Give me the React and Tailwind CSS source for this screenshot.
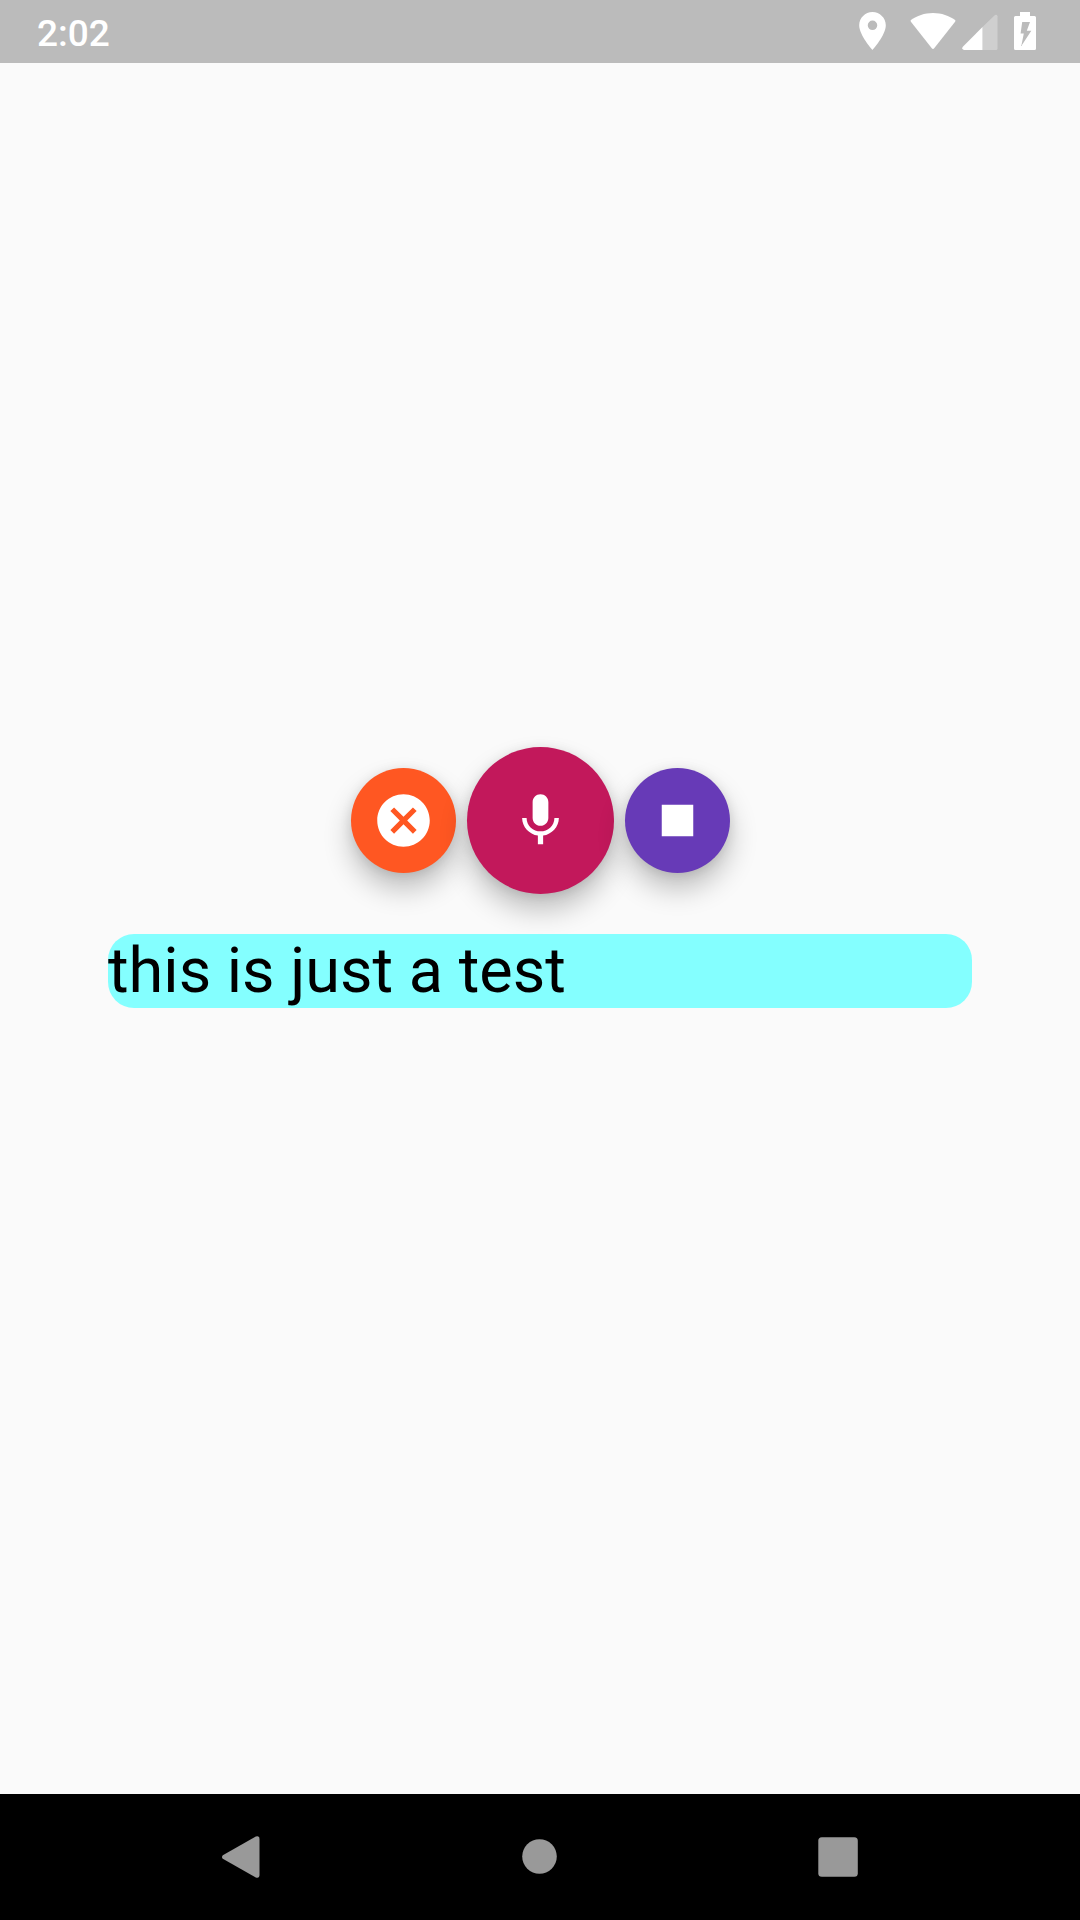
import React from "react";

function LocationIcon() {
  return (
    <svg viewBox="5 2 14 20" className="h-[38px] w-[27px]" fill="currentColor" aria-hidden="true">
      <path d="M12 2C8.13 2 5 5.13 5 9c0 5.25 7 13 7 13s7-7.75 7-13c0-3.87-3.13-7-7-7zm0 9.5a2.5 2.5 0 0 1 0-5 2.5 2.5 0 0 1 0 5z" />
    </svg>
  );
}

function WifiIcon() {
  return (
    <svg viewBox="0 0 46 38" className="h-[38px] w-[46px]" fill="currentColor" aria-hidden="true">
      <path d="M23 1C14.5 1 6.8 3.8.9 8.1Q.2 8.7.9 9.7L21.8 36.2Q23 37.6 24.2 36.2L45.1 9.7Q45.8 8.7 45.1 8.1C39.2 3.8 31.500 1 23 1z" />
    </svg>
  );
}

function SignalIcon() {
  return (
    <svg viewBox="0 0 36 36" className="h-9 w-9" fill="currentColor" aria-hidden="true">
      <path d="M20.500 13V36H34Q35.500 36 35.500 34.500V2.200Q35 .200 33 1z" opacity="0.3" />
      <path d="M20.500 13V36H2Q-.500 35.500.600 33z" />
    </svg>
  );
}

function BatteryIcon() {
  return (
    <svg viewBox="0 0 22 38" className="h-[38px] w-[22px]" fill="currentColor" aria-hidden="true">
      <path
        fillRule="evenodd"
        d="M6 0H16V4H20.500Q22 4 22 5.500V36.500Q22 38 20.500 38H1.500Q0 38 0 36.500V5.500Q0 4 1.500 4H6zM8.200 10L6.600 21.500H9.800L7.300 34L17.300 18.800H12.800L16 10z"
      />
    </svg>
  );
}

function StatusBar() {
  return (
    <header className="flex h-[63px] items-center justify-between bg-[#bbbbbb] pl-[37px] pr-11 text-white">
      <time className="pt-1 text-[37px] font-medium leading-[44px]">2:02</time>
      <div className="flex items-end pb-0.5">
        <LocationIcon />
        <div className="ml-6 flex items-end">
          <WifiIcon />
          <div className="ml-1.5 flex items-end gap-4">
            <SignalIcon />
            <BatteryIcon />
          </div>
        </div>
      </div>
    </header>
  );
}

function RoundButton({ label, className, path }) {
  return (
    <button
      type="button"
      aria-label={label}
      className={
        "flex shrink-0 items-center justify-center rounded-full text-white shadow-[0_16px_28px_rgba(0,0,0,0.24),0_2px_12px_rgba(0,0,0,0.10)] " +
        className
      }
    >
      <svg viewBox="0 0 24 24" className="size-[63px]" fill="currentColor" aria-hidden="true">
        <path d={path} />
      </svg>
    </button>
  );
}

const CANCEL =
  "M12 2C6.470 2 2 6.470 2 12s4.470 10 10 10 10-4.470 10-10S17.530 2 12 2zm5 13.590L15.590 17 12 13.410 8.410 17 7 15.590 10.590 12 7 8.410 8.410 7 12 10.590 15.590 7 17 8.410 13.410 12 17 15.590z";
const MIC =
  "M12 14c1.660 0 2.990-1.340 2.990-3L15 5c0-1.660-1.340-3-3-3S9 3.340 9 5v6c0 1.660 1.340 3 3 3zm5.300-3c0 3-2.540 5.100-5.300 5.100S6.700 14 6.700 11H5c0 3.410 2.720 6.230 6 6.720V21h2v-3.280c3.280-.480 6-3.300 6-6.720h-1.700z";
const STOP = "M6 6h12v12H6z";

function NavButton({ label, children }) {
  return (
    <button type="button" aria-label={label} className="flex items-center justify-center">
      <svg viewBox="0 0 42 42" className="size-[42px]" fill="currentColor" aria-hidden="true">
        {children}
      </svg>
    </button>
  );
}

export default function App() {
  return (
    <div className="flex min-h-screen flex-col bg-[#fafafa] font-[Roboto,sans-serif] text-black">
      <StatusBar />
      <main className="flex flex-1 flex-col items-center justify-center pb-[102px]">
        <div className="flex items-center gap-[11px]">
          <RoundButton label="Cancel" className="size-[105px] bg-[#ff5722]" path={CANCEL} />
          <RoundButton label="Record" className="size-[147px] bg-[#c2185b]" path={MIC} />
          <RoundButton label="Stop" className="size-[105px] bg-[#673ab7]" path={STOP} />
        </div>
        <p className="mt-10 w-4/5 rounded-[26px] bg-[#84ffff] text-[63px] leading-[74px]">
          this is just a test
        </p>
      </main>
      <nav className="grid h-[126px] grid-cols-3 bg-black px-[93px] text-[#999999]">
        <NavButton label="Back">
          <path d="M1.800 19.200 34.800.600Q38.500 -.500 38.500 3.200V38.800Q38.500 42.500 34.800 41.400L1.800 22.800Q.200 21 1.800 19.200z" />
        </NavButton>
        <NavButton label="Home">
          <circle cx="20.500" cy="20.500" r="17.300" />
        </NavButton>
        <NavButton label="Recent apps">
          <rect x="1.300" y="1.300" width="39.500" height="39.500" rx="3.500" />
        </NavButton>
      </nav>
    </div>
  );
}
